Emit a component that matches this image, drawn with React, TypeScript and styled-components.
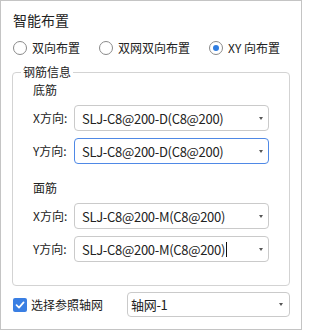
import React from 'react';
import styled, { createGlobalStyle } from 'styled-components';

const Global = createGlobalStyle`
  html, body { margin: 0; padding: 0; background: #ffffff; }
  body { font-family: "Noto Sans CJK SC", "Microsoft YaHei", sans-serif; color: #222; }
  * { box-sizing: border-box; }
`;

const Panel = styled.div`
  width: 302px;
  height: 330px;
  border: 1px solid #c4c4c4;
  padding: 9px 11px 0 11px;
  display: flex;
  flex-direction: column;
  background: #fff;
`;

const Title = styled.div`
  font-size: 14px;
  line-height: 20px;
  padding-left: 1px;
  color: #222;
`;

const RadioRow = styled.div`
  display: flex;
  align-items: center;
  gap: 19px;
  height: 20px;
  margin-top: 8px;
  padding-left: 1px;
`;

const RadioItem = styled.label`
  display: flex;
  align-items: center;
  gap: 5px;
  font-size: 12px;
  line-height: 20px;
`;

const RadioCircle = styled.span<{ $checked?: boolean }>`
  width: 14px;
  height: 14px;
  border-radius: 50%;
  border: 1px solid #8a8a8a;
  background: #fff;
  display: flex;
  align-items: center;
  justify-content: center;
  &::after {
    content: '';
    width: 6px;
    height: 6px;
    border-radius: 50%;
    background: ${p => (p.$checked ? '#2f7de1' : 'transparent')};
  }
`;

const Fieldset = styled.fieldset`
  margin: 6px 0 0 0;
  padding: 0 0 23px 8px;
  border: 1px solid #d3d3d3;
  border-radius: 4px;
  min-width: 0;
`;

const Legend = styled.legend`
  font-size: 12px;
  line-height: 16px;
  padding: 0 2px;
`;

const Inner = styled.div`
  padding-left: 12px;
  display: flex;
  flex-direction: column;
`;

const Group = styled.div<{ $first?: boolean }>`
  display: flex;
  flex-direction: column;
  gap: 7px;
  margin-top: ${p => (p.$first ? '0' : '14px')};
`;

const GroupTitle = styled.div`
  font-size: 12px;
  line-height: 20px;
  margin-bottom: -2px;
`;

const Row = styled.div`
  display: flex;
  align-items: center;
`;

const RowLabel = styled.span`
  width: 41px;
  font-size: 12px;
  line-height: 20px;
`;

const Select = styled.div<{ $focused?: boolean; $width: number; $height: number; $padL: number; $padR: number }>`
  width: ${p => p.$width}px;
  height: ${p => p.$height}px;
  border: 1px solid ${p => (p.$focused ? '#4f89e6' : '#cacaca')};
  border-radius: 4px;
  background: #fff;
  display: flex;
  align-items: center;
  padding: 0 ${p => p.$padR}px 0 ${p => p.$padL}px;
  font-size: 13px;
  color: #222;
`;

const SelectText = styled.span`
  flex: 1;
  white-space: nowrap;
  display: flex;
  align-items: center;
  letter-spacing: -0.3px;
`;

const Caret = styled.span`
  display: inline-block;
  width: 1px;
  height: 15px;
  background: #111;
  margin-left: 1px;
`;

const Arrow = styled.span`
  width: 0;
  height: 0;
  border-left: 2.5px solid transparent;
  border-right: 2.5px solid transparent;
  border-top: 3px solid #555;
`;

const Footer = styled.div`
  display: flex;
  align-items: center;
  margin-top: 6px;
`;

const CheckLabel = styled.label`
  width: 115px;
  display: flex;
  align-items: center;
  gap: 4px;
  font-size: 12px;
  line-height: 20px;
  padding-left: 1px;
`;

const CheckBox = styled.span`
  width: 14px;
  height: 14px;
  border-radius: 2px;
  background: #3a7fe3;
  display: flex;
  align-items: center;
  justify-content: center;
`;

type SelProps = { value: string; focused?: boolean; caret?: boolean };

const RebarSelect: React.FC<SelProps> = ({ value, focused, caret }) => (
  <Select $focused={focused} $width={195} $height={26} $padL={7} $padR={5}>
    <SelectText>
      {value}
      {caret && <Caret />}
    </SelectText>
    <Arrow />
  </Select>
);

export default function App() {
  return (
    <>
      <Global />
      <Panel>
        <Title>智能布置</Title>
        <RadioRow>
          <RadioItem>
            <RadioCircle />
            双向布置
          </RadioItem>
          <RadioItem>
            <RadioCircle />
            双网双向布置
          </RadioItem>
          <RadioItem>
            <RadioCircle $checked />
            XY 向布置
          </RadioItem>
        </RadioRow>
        <Fieldset>
          <Legend>钢筋信息</Legend>
          <Inner>
            <Group $first>
              <GroupTitle>底筋</GroupTitle>
              <Row>
                <RowLabel>X方向:</RowLabel>
                <RebarSelect value="SLJ-C8@200-D(C8@200)" />
              </Row>
              <Row>
                <RowLabel>Y方向:</RowLabel>
                <RebarSelect value="SLJ-C8@200-D(C8@200)" focused />
              </Row>
            </Group>
            <Group>
              <GroupTitle>面筋</GroupTitle>
              <Row>
                <RowLabel>X方向:</RowLabel>
                <RebarSelect value="SLJ-C8@200-M(C8@200)" />
              </Row>
              <Row>
                <RowLabel>Y方向:</RowLabel>
                <RebarSelect value="SLJ-C8@200-M(C8@200)" caret />
              </Row>
            </Group>
          </Inner>
        </Fieldset>
        <Footer>
          <CheckLabel>
            <CheckBox>
              <svg width="10" height="10" viewBox="0 0 10 10">
                <path d="M1.5 5.2 L4 7.6 L8.6 2.4" fill="none" stroke="#fff" strokeWidth="1.7" strokeLinecap="round" strokeLinejoin="round" />
              </svg>
            </CheckBox>
            选择参照轴网
          </CheckLabel>
          <Select $width={163} $height={25} $padL={3} $padR={6}>
            <SelectText>轴网-1</SelectText>
            <Arrow />
          </Select>
        </Footer>
      </Panel>
    </>
  );
}
